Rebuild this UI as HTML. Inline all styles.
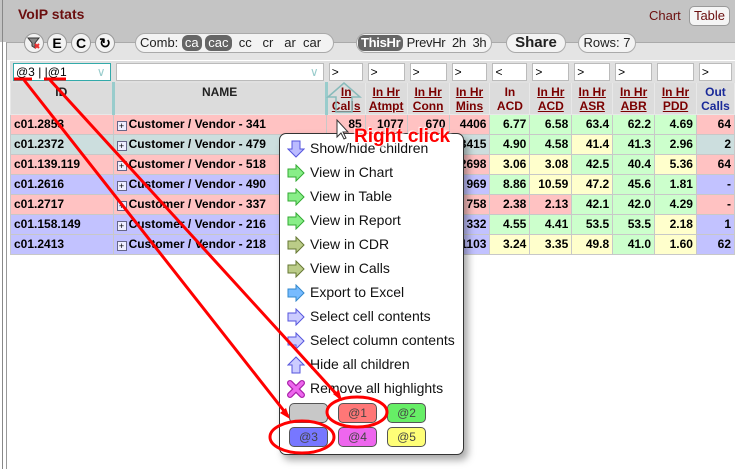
<!DOCTYPE html>
<html><head><meta charset="utf-8"><style>
*{box-sizing:border-box;margin:0;padding:0}
body{width:735px;height:469px;overflow:hidden;background:#fff;font-family:"Liberation Sans",Arial,sans-serif;position:relative}
.top{position:absolute;left:0;top:0;width:735px;height:42px;background:#c4c4c4}
.tb{position:absolute;left:6px;top:42px;width:729px;height:18px;background:#e4e4e4;border-top:1px solid #f4f4f4}
.frame{position:absolute;left:2px;top:0;width:733px;height:469px;border-left:1px solid #888}
.frame2{position:absolute;left:6px;top:42px;width:729px;height:427px;border-left:1px solid #999;border-top:1px solid #aaa}
.title{position:absolute;left:18px;top:6px;font-weight:bold;font-size:14px;color:#6b0f0f}
.pill{position:absolute;background:#f3f3f3;border:1px solid #aaa;border-radius:11px;height:20px;font-size:13px;line-height:18px;color:#222;white-space:nowrap}
.rb{position:absolute;top:33px;width:20px;height:20px;border-radius:50%;background:#f3f3f3;border:1px solid #999;font-weight:bold;font-size:14px;text-align:center;line-height:18px}
.dk{display:inline-block;background:#666;color:#fff;border-radius:6px;padding:0 3px;line-height:16px}
table{position:absolute;left:10px;top:61px;border-collapse:collapse;table-layout:fixed;font-size:12px}
td{border:1px solid #c8c8c8;font-weight:bold;padding:0;white-space:nowrap;overflow:hidden;vertical-align:top}
td>div.c{height:19px;line-height:19px;padding:0 3px;overflow:hidden}
td.n>div.c{text-align:right}
tr.f td{background:#e0e0e0;border-color:#e0e0e0}
tr.f td>div.c{height:20px;padding:1px 2px}
.fi{background:#fff;border:1px solid #bbb;height:18px;font-size:12px;font-weight:normal;line-height:16px;padding-left:2px}
tr.h td{background:#dcdcdc;border-color:#e8e8e8;text-align:center;color:#7a0000;font-size:12px}
tr.h td>div.c{height:31px;line-height:14px;padding-top:2px}
tr.h td u{color:#7a0000}
.p{background:#ffc2c2}.g{background:#ccdede}.b{background:#c2c2ff}.G{background:#ccffcc}.Y{background:#ffffcc}
.pl{display:inline-block;width:10px;height:10px;border:1px solid #668;font-size:9px;line-height:8px;text-align:center;vertical-align:-1px;margin-right:2px;background:#eef;font-weight:normal}
.menu{position:absolute;left:279px;top:133px;width:185px;height:322px;background:#fff;border:1px solid #333;border-radius:7px;box-shadow:4px 5px 8px rgba(0,0,0,.35)}
.mi{position:absolute;left:30px;font-size:14px;color:#111}
.ic{position:absolute;left:7px;width:18px;height:18px}
.sw{position:absolute;width:39px;height:20px;border:1px solid #555;border-radius:5px;font-size:12px;text-align:center;line-height:18px;color:#444}
</style></head><body>
<div class="top"></div><div class="tb"></div>
<div class="frame"></div><div class="frame2"></div>
<div class="title">VoIP stats</div>
<div style="position:absolute;left:649px;top:8px;font-size:13px;color:#6b0f0f">Chart</div>
<div style="position:absolute;left:689px;top:6px;width:41px;height:20px;background:#f5f5f5;border:1px solid #999;border-radius:5px;font-size:13px;color:#6b0f0f;text-align:center;line-height:18px">Table</div>
<div class="rb" style="left:24px"><svg width="14" height="14" viewBox="0 0 14 14" style="margin-top:2px"><path d="M1 2h11l-4 5v5l-3-2V7z" fill="#888" stroke="#333"/><path d="M8 8l4 4M12 8l-4 4" stroke="#e33" stroke-width="2"/></svg></div>
<div class="rb" style="left:47px">E</div>
<div class="rb" style="left:71px">C</div>
<div class="rb" style="left:95px">↻</div>
<div class="pill" style="left:135px;top:33px;width:199px;padding-left:4px">Comb: <span class="dk">ca</span> <span class="dk">cac</span> &nbsp;cc &nbsp; cr &nbsp; ar &nbsp;car</div>
<div class="pill" style="left:356px;top:33px;width:136px;padding-left:1px;letter-spacing:-0.3px"><span class="dk" style="font-weight:bold">ThisHr</span> PrevHr &nbsp;2h &nbsp;3h</div>
<div class="pill" style="left:506px;top:33px;width:60px;font-weight:bold;font-size:15px;text-align:center">Share</div>
<div class="pill" style="left:578px;top:33px;width:58px;text-align:center">Rows: 7</div>
<table>
<colgroup><col style="width:103px"><col style="width:214px"><col style="width:39px"><col style="width:42px"><col style="width:42px"><col style="width:41px"><col style="width:40px"><col style="width:42px"><col style="width:41px"><col style="width:42px"><col style="width:42px"><col style="width:38px"></colgroup>
<tr class="f"><td><div class="c"><div class="fi" style="border-color:#3aa">@3 | |@1<span style="float:right;color:#9cc;margin-right:4px">∨</span></div></div></td><td><div class="c"><div class="fi"><span style="float:right;color:#9cc;margin-right:4px">∨</span></div></div></td><td><div class="c"><div class="fi">&gt;</div></div></td><td><div class="c"><div class="fi">&gt;</div></div></td><td><div class="c"><div class="fi">&gt;</div></div></td><td><div class="c"><div class="fi">&gt;</div></div></td><td><div class="c"><div class="fi">&lt;</div></div></td><td><div class="c"><div class="fi">&gt;</div></div></td><td><div class="c"><div class="fi">&gt;</div></div></td><td><div class="c"><div class="fi">&gt;</div></div></td><td><div class="c"><div class="fi"></div></div></td><td><div class="c"><div class="fi">&gt;</div></div></td></tr>
<tr class="h"><td style="color:#222;border-right:3px solid #9cc"><div class="c">ID</div></td><td style="color:#222;border-right:3px solid #9cc"><div class="c">NAME</div></td><td><div class="c"><u>In</u><br><u>Calls</u></div></td><td><div class="c"><u>In Hr</u><br><u>Atmpt</u></div></td><td><div class="c"><u>In Hr</u><br><u>Conn</u></div></td><td><div class="c"><u>In Hr</u><br><u>Mins</u></div></td><td><div class="c">In<br>ACD</div></td><td><div class="c"><u>In Hr</u><br><u>ACD</u></div></td><td><div class="c"><u>In Hr</u><br><u>ASR</u></div></td><td><div class="c"><u>In Hr</u><br><u>ABR</u></div></td><td><div class="c"><u>In Hr</u><br><u>PDD</u></div></td><td style="color:#1a2a99"><div class="c">Out<br>Calls</div></td></tr>
<tr><td class="p"><div class="c">c01.2853</div></td><td class="p"><div class="c"><span class="pl">+</span>Customer / Vendor - 341</div></td><td class="p n"><div class="c">85</div></td><td class="p n"><div class="c">1077</div></td><td class="p n"><div class="c">670</div></td><td class="p n"><div class="c">4406</div></td><td class="G n"><div class="c">6.77</div></td><td class="G n"><div class="c">6.58</div></td><td class="G n"><div class="c">63.4</div></td><td class="G n"><div class="c">62.2</div></td><td class="G n"><div class="c">4.69</div></td><td class="p n"><div class="c">64</div></td></tr>
<tr><td class="g"><div class="c">c01.2372</div></td><td class="g"><div class="c"><span class="pl">+</span>Customer / Vendor - 479</div></td><td class="g n"><div class="c">53</div></td><td class="g n"><div class="c">802</div></td><td class="g n"><div class="c">512</div></td><td class="g n"><div class="c">3415</div></td><td class="G n"><div class="c">4.90</div></td><td class="G n"><div class="c">4.58</div></td><td class="Y n"><div class="c">41.4</div></td><td class="G n"><div class="c">41.3</div></td><td class="G n"><div class="c">2.96</div></td><td class="g n"><div class="c">2</div></td></tr>
<tr><td class="p"><div class="c">c01.139.119</div></td><td class="p"><div class="c"><span class="pl">+</span>Customer / Vendor - 518</div></td><td class="p n"><div class="c">40</div></td><td class="p n"><div class="c">701</div></td><td class="p n"><div class="c">455</div></td><td class="p n"><div class="c">2698</div></td><td class="Y n"><div class="c">3.06</div></td><td class="Y n"><div class="c">3.08</div></td><td class="G n"><div class="c">42.5</div></td><td class="G n"><div class="c">40.4</div></td><td class="Y n"><div class="c">5.36</div></td><td class="p n"><div class="c">64</div></td></tr>
<tr><td class="b"><div class="c">c01.2616</div></td><td class="b"><div class="c"><span class="pl">+</span>Customer / Vendor - 490</div></td><td class="b n"><div class="c">12</div></td><td class="b n"><div class="c">311</div></td><td class="b n"><div class="c">142</div></td><td class="b n"><div class="c">969</div></td><td class="G n"><div class="c">8.86</div></td><td class="Y n"><div class="c">10.59</div></td><td class="Y n"><div class="c">47.2</div></td><td class="G n"><div class="c">45.6</div></td><td class="G n"><div class="c">1.81</div></td><td class="b n"><div class="c">-</div></td></tr>
<tr><td class="p"><div class="c">c01.2717</div></td><td class="p"><div class="c"><span class="pl">+</span>Customer / Vendor - 337</div></td><td class="p n"><div class="c">9</div></td><td class="p n"><div class="c">240</div></td><td class="p n"><div class="c">101</div></td><td class="p n"><div class="c">758</div></td><td class="p n"><div class="c">2.38</div></td><td class="p n"><div class="c">2.13</div></td><td class="G n"><div class="c">42.1</div></td><td class="G n"><div class="c">42.0</div></td><td class="G n"><div class="c">4.29</div></td><td class="p n"><div class="c">-</div></td></tr>
<tr><td class="b"><div class="c">c01.158.149</div></td><td class="b"><div class="c"><span class="pl">+</span>Customer / Vendor - 216</div></td><td class="b n"><div class="c">7</div></td><td class="b n"><div class="c">190</div></td><td class="b n"><div class="c">102</div></td><td class="b n"><div class="c">332</div></td><td class="G n"><div class="c">4.55</div></td><td class="G n"><div class="c">4.41</div></td><td class="G n"><div class="c">53.5</div></td><td class="G n"><div class="c">53.5</div></td><td class="Y n"><div class="c">2.18</div></td><td class="b n"><div class="c">1</div></td></tr>
<tr><td class="b"><div class="c">c01.2413</div></td><td class="b"><div class="c"><span class="pl">+</span>Customer / Vendor - 218</div></td><td class="b n"><div class="c">5</div></td><td class="b n"><div class="c">170</div></td><td class="b n"><div class="c">85</div></td><td class="b n"><div class="c">1103</div></td><td class="Y n"><div class="c">3.24</div></td><td class="Y n"><div class="c">3.35</div></td><td class="Y n"><div class="c">49.8</div></td><td class="G n"><div class="c">41.0</div></td><td class="Y n"><div class="c">1.60</div></td><td class="b n"><div class="c">62</div></td></tr>
</table>
<svg style="position:absolute;left:326px;top:82px" width="40" height="32"><path d="M2 15L18 1L34 15H26V30H10V15Z" fill="none" stroke="#8bb" stroke-width="1.5"/></svg>
<div class="menu">
<svg class="ic" style="top:6px" viewBox="0 0 18 18"><path d="M5 1h8v8h4l-8 8-8-8h4z" fill="#bbf" stroke="#55d"/></svg><div class="mi" style="top:6px">Show/hide children</div>
<svg class="ic" style="top:30px" viewBox="0 0 18 18"><path d="M1 5h8V1l8 8-8 8v-4H1z" fill="#8e8" stroke="#3a3"/></svg><div class="mi" style="top:30px">View in Chart</div>
<svg class="ic" style="top:54px" viewBox="0 0 18 18"><path d="M1 5h8V1l8 8-8 8v-4H1z" fill="#8e8" stroke="#3a3"/></svg><div class="mi" style="top:54px">View in Table</div>
<svg class="ic" style="top:78px" viewBox="0 0 18 18"><path d="M1 5h8V1l8 8-8 8v-4H1z" fill="#8e8" stroke="#3a3"/></svg><div class="mi" style="top:78px">View in Report</div>
<svg class="ic" style="top:102px" viewBox="0 0 18 18"><path d="M1 5h8V1l8 8-8 8v-4H1z" fill="#bc8" stroke="#673"/></svg><div class="mi" style="top:102px">View in CDR</div>
<svg class="ic" style="top:126px" viewBox="0 0 18 18"><path d="M1 5h8V1l8 8-8 8v-4H1z" fill="#bc8" stroke="#673"/></svg><div class="mi" style="top:126px">View in Calls</div>
<svg class="ic" style="top:150px" viewBox="0 0 18 18"><path d="M1 5h8V1l8 8-8 8v-4H1z" fill="#7bf" stroke="#38c"/></svg><div class="mi" style="top:150px">Export to Excel</div>
<svg class="ic" style="top:174px" viewBox="0 0 18 18"><path d="M1 5h8V1l8 8-8 8v-4H1z" fill="#ccf" stroke="#55d"/></svg><div class="mi" style="top:174px">Select cell contents</div>
<svg class="ic" style="top:198px" viewBox="0 0 18 18"><path d="M1 5h8V1l8 8-8 8v-4H1z" fill="#ccf" stroke="#55d"/></svg><div class="mi" style="top:198px">Select column contents</div>
<svg class="ic" style="top:222px" viewBox="0 0 18 18"><path d="M5 17h8V9h4L9 1 1 9h4z" fill="#ccf" stroke="#55d"/></svg><div class="mi" style="top:222px">Hide all children</div>
<svg class="ic" style="top:246px" viewBox="0 0 18 18"><path d="M3 3l12 12M15 3L3 15" stroke="#a2a" stroke-width="6" stroke-linecap="round"/><path d="M3 3l12 12M15 3L3 15" stroke="#e6e" stroke-width="3.5" stroke-linecap="round"/></svg><div class="mi" style="top:246px">Remove all highlights</div>
<div class="sw" style="left:9px;top:269px;background:#c8c8c8"></div>
<div class="sw" style="left:58px;top:269px;background:#f77">@1</div>
<div class="sw" style="left:107px;top:269px;background:#6e6">@2</div>
<div class="sw" style="left:9px;top:293px;background:#77f">@3</div>
<div class="sw" style="left:58px;top:293px;background:#e6e">@4</div>
<div class="sw" style="left:107px;top:293px;background:#ff7">@5</div>
</div>
<div style="position:absolute;left:354px;top:126px;font-size:19px;font-weight:bold;color:#f00;text-shadow:2px 2px 2px #fff,-1px -1px 1px #fff">Right click</div>
<svg style="position:absolute;left:0;top:0" width="735" height="469">
<path d="M337 120v17l4-4 3 6 2-1-3-6h5z" fill="#fff" stroke="#333"/>
<path d="M14 79h18M44 79h22" stroke="#f00" stroke-width="3"/>
<g stroke="#f00" stroke-width="3" fill="none">
<path d="M24 80L288 416"/><path d="M50 80L340 398"/>
<ellipse cx="357" cy="412" rx="30" ry="15"/><ellipse cx="302" cy="437" rx="32" ry="16"/>
</g>
<path d="M290 419l-10-6 6-5z" fill="#f00"/><path d="M342 401l-9-7 6-4z" fill="#f00"/>
</svg>
</body></html>
